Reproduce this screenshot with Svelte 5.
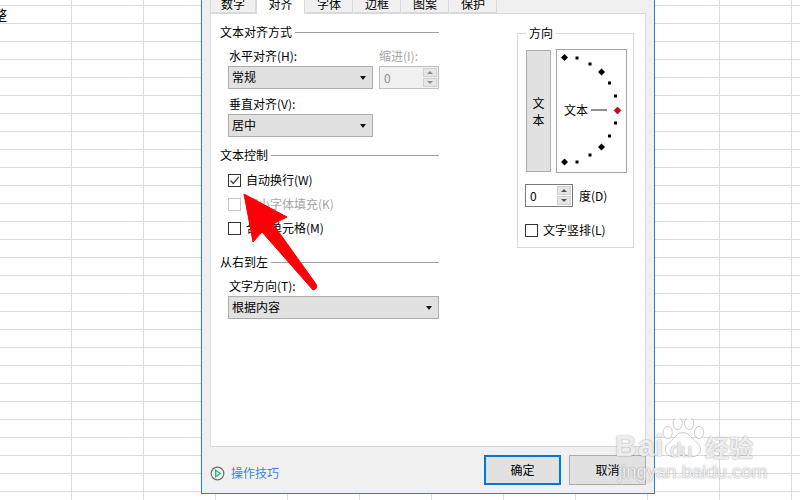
<script>
  const tabs = ['数字', '对齐', '字体', '边框', '图案', '保护'];
  const squares = [[577,58],[590,64],[609.5,83],[615.5,96],[615.5,123],[609.5,136],[590,155],[577,162]];
  const diamonds = [[564.5,57.5],[601.5,72],[601.5,147],[564.5,162]];
  const dm = (x, y, r) => `${x},${y - r} ${x + r},${y} ${x},${y + r} ${x - r},${y}`;
</script>

<div class="sheet">
  <div class="cell-text">整</div>
  <div class="dialog">
    <div class="tabs">
      {#each tabs as t, i}
        <div class="tab" class:active={i === 1}><span>{t}</span></div>
      {/each}
    </div>
    <div class="panel">
      <div class="left">
        <div class="heading first"><span>文本对齐方式</span><i></i></div>
        <div class="two">
          <div class="field">
            <div class="label l1">水平对齐(H):</div>
            <div class="select w145"><span>常规</span><b></b></div>
          </div>
          <div class="field">
            <div class="label off">缩进(I):</div>
            <div class="spin disabled">
              <span>0</span>
              <div class="spinbtns"><em class="up"></em><em class="down"></em></div>
            </div>
          </div>
        </div>
        <div class="label l2">垂直对齐(V):</div>
        <div class="select w145"><span>居中</span><b></b></div>
        <div class="heading h2"><span>文本控制</span><i></i></div>
        <div class="check c1"><u class="box on"><svg width="11" height="11" viewBox="0 0 11 11"><path d="M1.5 5.5 L4.3 8.5 L9.7 1.8" fill="none" stroke="#444" stroke-width="1.3"/></svg></u><span>自动换行(W)</span></div>
        <div class="check c2 off"><u class="box"></u><span>缩小字体填充(K)</span></div>
        <div class="check c2"><u class="box"></u><span>合并单元格(M)</span></div>
        <div class="heading h3"><span>从右到左</span><i></i></div>
        <div class="label l3">文字方向(T):</div>
        <div class="select full"><span>根据内容</span><b></b></div>
      </div>

      <fieldset class="group">
        <legend>方向</legend>
        <div class="dial-row">
          <div class="vbtn"><span>文</span><span>本</span></div>
          <svg class="dial" width="71" height="124" viewBox="556 49 71 124">
            <rect x="556.5" y="49.5" width="70" height="123" fill="#fff" stroke="#a6a6a6"/>
            {#each squares as [x, y]}
              <rect x={x - 1.5} y={y - 1.5} width="3" height="3" fill="#000"/>
            {/each}
            {#each diamonds as [x, y]}
              <polygon points={dm(x, y, 3.5)} fill="#000"/>
            {/each}
            <polygon points={dm(617.5, 110.5, 3.5)} fill="#e00000" stroke="#300" stroke-width=".5"/>
            <rect x="591" y="109" width="16" height="2" fill="#8f8f8f"/>
            <text x="564" y="114.5" class="dialtext">文本</text>
          </svg>
        </div>
        <div class="deg">
          <div class="spin small">
            <span>0</span>
            <div class="spinbtns"><em class="up"></em><em class="down"></em></div>
          </div>
          <span class="degl">度(D)</span>
        </div>
        <div class="check vert"><u class="box"></u><span>文字竖排(L)</span></div>
      </fieldset>
    </div>
    <div class="footer">
      <svg class="play" width="15" height="15" viewBox="0 0 15 15">
        <circle cx="7.5" cy="7.5" r="6.3" fill="none" stroke="#6f6f6f" stroke-width="1.2"/>
        <path d="M5.7 4.3 L10.3 7.5 L5.7 10.7 Z" fill="none" stroke="#27b98a" stroke-width="1.4"/>
      </svg>
      <span class="tips">操作技巧</span>
      <div class="btn default">确定</div>
      <div class="btn">取消</div>
    </div>
  </div>

  <svg class="arrow" width="800" height="500" viewBox="0 0 800 500">
    <path d="M244 194 L287 217 L273 224 L316 284 Q318 289 313 290 L262 232 L253 242 Z" fill="#fb0006" stroke="#fb0006" stroke-linejoin="round"/>
  </svg>

  <div class="wm">
    <span class="bai">Bai</span>
    <svg class="paw" width="46" height="46" viewBox="0 0 58 60">
      <g fill="rgba(255,255,255,.7)" stroke="rgba(120,120,120,.4)" stroke-width="1.2">
        <ellipse cx="9" cy="19" rx="6" ry="8"/>
        <ellipse cx="22" cy="7" rx="6" ry="8"/>
        <ellipse cx="37" cy="7" rx="6" ry="8"/>
        <ellipse cx="50" cy="19" rx="6" ry="8"/>
        <path d="M29 19 C38 19 40 28 47 32 C56 38 52 52 40 50 C33 48 25 48 18 50 C6 52 2 38 11 32 C18 28 20 19 29 19 Z"/>
      </g>
    </svg>
    <span class="du">du</span>
    <span class="jy">经验</span>
    <span class="url">jingyan.baidu.com</span>
  </div>
</div>

<style>
  :global(body) { margin: 0; }
  .sheet {
    position: relative;
    width: 800px;
    height: 500px;
    overflow: hidden;
    padding-left: 201px;
    box-sizing: border-box;
    font-family: "Noto Sans CJK SC", "Liberation Sans", sans-serif;
    font-size: 12px;
    color: #000;
    background-color: #fff;
    background-image:
      linear-gradient(to right, #d8dbe6 1px, transparent 1px),
      linear-gradient(to bottom, #d8dbe6 1px, transparent 1px);
    background-size: 72px 18px;
    background-position: 71px 5px;
  }
  .cell-text {
    position: absolute;
    left: -7px;
    top: 6px;
    font-size: 14px;
    line-height: 16px;
    color: #000;
  }
  .dialog {
    width: 454px;
    height: 494px;
    box-sizing: border-box;
    border: 1px solid #2b7fd3;
    border-top: 0;
    background: #f0f0f0;
    padding: 0 8px;
    display: flex;
    flex-direction: column;
  }
  .tabs { display: flex; height: 13px; position: relative; z-index: 1; }
  .tab {
    width: 47px;
    height: 13px;
    margin-left: 1px;
    box-sizing: border-box;
    border-right: 1px solid #d9d9d9;
    border-bottom: 1px solid #d9d9d9;
    text-align: center;
    overflow: hidden;
  }
  .tab:first-child { margin-left: 0; border-left: 1px solid #d9d9d9; width: 46px; }
  .tab span { display: block; line-height: 16px; margin-top: -4px; }
  .tab.active {
    background: #fff;
    height: 14px;
    width: 49px;
    margin-left: 0;
    border-bottom: 0;
    border-left: 1px solid #d9d9d9;
  }
  .panel {
    height: 434px;
    box-sizing: border-box;
    background: #fff;
    border: 1px solid #d9d9d9;
    padding: 10px 0 0 9px;
    display: flex;
    align-items: flex-start;
  }
  .left { width: 219px; flex: none; }
  .heading { display: flex; align-items: center; height: 16px; line-height: 16px; }
  .heading i { flex: 1; height: 1px; background: #a0a0a0; margin-left: 3px; }
  .h2 { margin-top: 10px; }
  .h3 { margin-top: 18px; }
  .two { display: flex; gap: 6px; padding-left: 8px; }
  .field { display: flex; flex-direction: column; }
  .label { height: 16px; line-height: 16px; padding-left: 1px; }
  .l1 { margin-top: 8px; }
  .field .label.off { margin-top: 8px; padding-left: 0; color: #a6a6a6; }
  .l2 { margin: 7px 0 0 8px; }
  .l3 { margin: 8px 0 0 8px; }
  .select {
    margin-top: 2px;
    height: 23px;
    box-sizing: border-box;
    background: #e1e1e1;
    border: 1px solid #adadad;
    display: flex;
    align-items: center;
    justify-content: space-between;
    padding: 0 6px 2px 3px;
  }
  .w145 { width: 145px; margin-left: 8px; }
  .field .w145 { margin-left: 0; }
  .full { width: 211px; margin-left: 8px; }
  .select b {
    width: 0;
    height: 0;
    margin-top: 2px;
    border-left: 3.5px solid transparent;
    border-right: 3.5px solid transparent;
    border-top: 4px solid #111;
  }
  .spin {
    box-sizing: border-box;
    display: flex;
    align-items: center;
    justify-content: space-between;
    background: #fff;
    border: 1px solid #7a7a7a;
    padding: 1px 1px 1px 4px;
  }
  .spin.disabled {
    width: 60px;
    height: 23px;
    margin-top: 2px;
    background: #f0f0f0;
    border-color: #bfbfbf;
    color: #8c8c8c;
  }
  .spin.small { width: 48px; height: 23px; }
  .spinbtns { display: flex; flex-direction: column; gap: 1px; width: 14px; }
  .spinbtns em {
    height: 9px;
    background: #e6e6e6;
    border: 1px solid #d0d0d0;
    box-sizing: border-box;
    display: flex;
    align-items: center;
    justify-content: center;
  }
  .spinbtns em::after {
    content: "";
    border-left: 3px solid transparent;
    border-right: 3px solid transparent;
  }
  .spinbtns .up::after { border-bottom: 3px solid #555; }
  .spinbtns .down::after { border-top: 3px solid #555; }
  .disabled .spinbtns .up::after { border-bottom-color: #8c8c8c; }
  .disabled .spinbtns .down::after { border-top-color: #8c8c8c; }
  .check { display: flex; align-items: center; gap: 5px; height: 16px; line-height: 16px; }
  .c1 { margin: 9px 0 0 8px; }
  .c2 { margin: 8px 0 0 8px; }
  .check.off { color: #a6a6a6; }
  .box {
    width: 13px;
    height: 13px;
    box-sizing: border-box;
    border: 1px solid #333;
    background: #fff;
    display: flex;
    align-items: center;
    justify-content: center;
    text-decoration: none;
  }
  .off .box { border-color: #c8c8c8; }
  .group {
    margin: 1px 0 0 78px;
    padding: 0;
    box-sizing: border-box;
    width: 117px;
    height: 223px;
    border: 1px solid #d9d9d9;
  }
  .group legend { padding: 0 3px; margin-left: 8px; line-height: 16px; height: 16px; }
  .dial-row { display: flex; gap: 5px; margin: 8px 0 0 8px; align-items: flex-start; }
  .vbtn {
    width: 25px;
    height: 122px;
    margin-top: 1px;
    box-sizing: border-box;
    background: #e1e1e1;
    border: 1px solid #adadad;
    display: flex;
    flex-direction: column;
    align-items: center;
    justify-content: center;
    gap: 2px;
    line-height: 15px;
  }
  .dial { display: block; }
  .dialtext { font-size: 12px; fill: #000; }
  .deg { display: flex; align-items: center; gap: 6px; margin: 11px 0 0 7px; }
  .degl { line-height: 16px; }
  .vert { margin: 15px 0 0 7px; }
  .footer { flex: 1; display: flex; align-items: flex-start; }
  .play { margin: 19px 0 0 0; flex: none; }
  .tips { margin: 18px 0 0 6px; color: #3b86e0; line-height: 16px; width: 253px; flex: none; }
  .btn {
    flex: none;
    width: 77px;
    height: 30px;
    margin-top: 8px;
    margin-right: 8px;
    box-sizing: border-box;
    background: #e1e1e1;
    border: 1px solid #adadad;
    text-align: center;
    line-height: 28px;
  }
  .btn:last-child { margin-right: 0; }
  .btn.default { border: 2px solid #0078d7; line-height: 26px; }
  .arrow { position: absolute; left: 0; top: 0; pointer-events: none; }
  .wm {
    position: absolute;
    left: 615px;
    top: 416px;
    width: 150px;
    height: 70px;
    font-family: "Liberation Sans", sans-serif;
    color: rgba(255, 255, 255, .85);
    text-shadow: 0 0 1.5px rgba(80, 80, 80, .7);
  }
  .wm > * { position: absolute; }
  .bai { left: 0; top: 14px; font-size: 30px; line-height: 32px; font-weight: 700; letter-spacing: 1px; }
  .paw { left: 45px; top: 2px; }
  .du { left: 55px; top: 22px; font-size: 20px; line-height: 24px; }
  .jy { left: 90px; top: 17px; font-family: "Noto Sans CJK SC", sans-serif; font-size: 24px; line-height: 28px; font-weight: 700; }
  .url { left: 3px; top: 46px; font-size: 18.5px; line-height: 20px; white-space: nowrap; }
</style>
